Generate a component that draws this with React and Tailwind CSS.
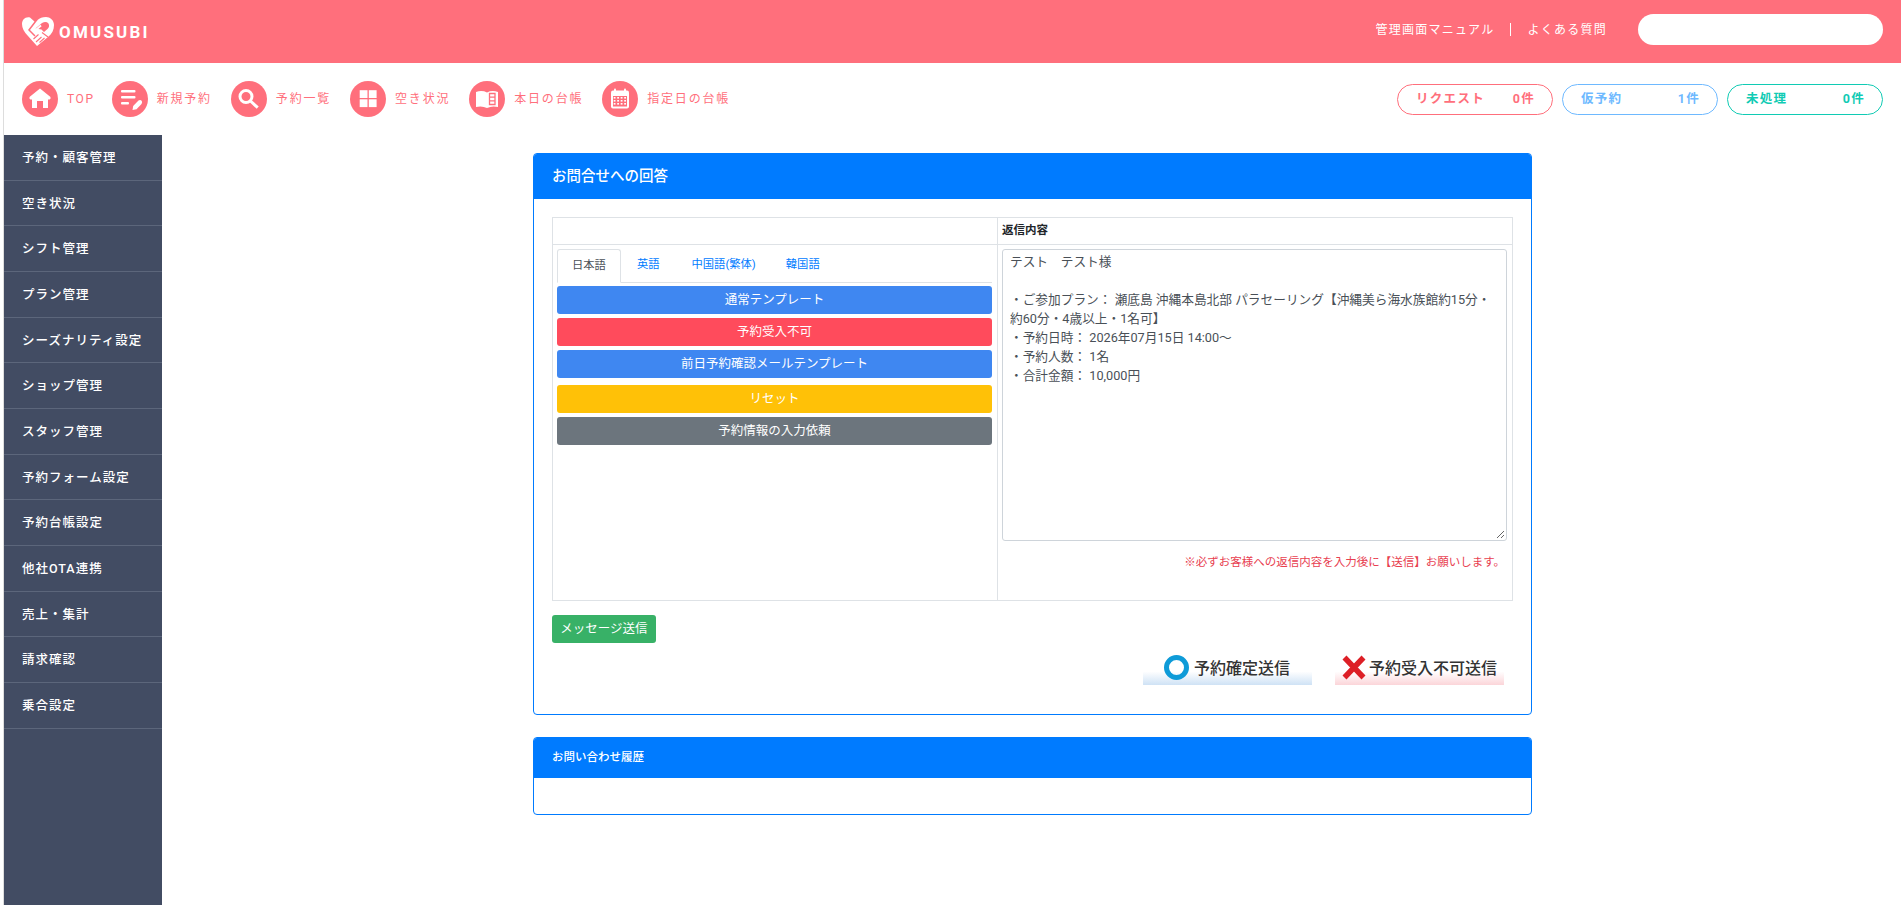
import React from "react";

const FONT = { fontFamily: '"Roboto", "Noto Sans CJK JP", sans-serif' };
const navs = [
  ["TOP", "home"],
  ["新規予約", "form"],
  ["予約一覧", "search"],
  ["空き状況", "grid"],
  ["本日の台帳", "book"],
  ["指定日の台帳", "cal"],
];
const side = ["予約・顧客管理","空き状況","シフト管理","プラン管理","シーズナリティ設定","ショップ管理","スタッフ管理","予約フォーム設定","予約台帳設定","他社OTA連携","売上・集計","請求確認","乗合設定"];

function Icon({ k }) {
  const inner = {
    home: <path d="M18 7.500 L7.500 16 Q7 18 8.500 18.500 H10 V27 H15 V20 H21 V27 H26 V18.500 H27.500 Q29 18 28.500 16 Z" fill="#fff" />,
    form: <g fill="#fff"><rect x="9" y="9" width="14.500" height="2.400" rx="1" /><rect x="9" y="15" width="14.500" height="2.400" rx="1" /><rect x="9" y="21" width="8" height="2.400" rx="1" /><path d="M20.500 29 L21.200 25 L26.500 19.500 Q28.500 18.500 29.800 20 Q30.500 21.500 29.500 23 L24.500 28.200 Z" /></g>,
    search: <g fill="none" stroke="#fff"><circle cx="15" cy="15.500" r="6" strokeWidth="3" /><path d="M19.500 20 L26.700 26.700" strokeWidth="3" /></g>,
    grid: <g fill="#fff"><rect x="9.700" y="9.200" width="7.800" height="7.800" /><rect x="18.800" y="9.200" width="7.800" height="7.800" /><rect x="9.700" y="18.300" width="7.800" height="7.800" /><rect x="18.800" y="18.300" width="7.800" height="7.800" /></g>,
    book: <g><path d="M7 11 Q13 9 18 11.500 V27 Q13 24.500 7 26 Z" fill="#fff" /><path d="M29 11 Q23 9 18 11.500 V27 Q23 24.500 29 26 Z" fill="#fff" /><path d="M20.500 12.500 H26 V23.500 H20.500 Z M20.500 16.200 H26 M20.500 19.800 H26" stroke="#FF6F7C" strokeWidth="1.300" fill="none" /></g>,
    cal: <g><rect x="9" y="9.500" width="18" height="18" rx="2" fill="#fff" /><rect x="12" y="7.500" width="2" height="4" rx="1" fill="#fff" /><rect x="22" y="7.500" width="2" height="4" rx="1" fill="#fff" /><rect x="11" y="15" width="14" height="10.500" fill="#FF6F7C" />{[12.500,16,19.500,23].flatMap((x) => [16.500,19.500,22.500].map((y) => <rect key={x + "-" + y} x={x - 0.8} y={y - 0.5} width="1.800" height="1.600" fill="#fff" />))}</g>,
  }[k];
  return (
    <svg width="36" height="36" viewBox="0 0 36 36" className="shrink-0">
      <circle cx="18" cy="18" r="18" fill="#FF6F7C" />
      {inner}
    </svg>
  );
}

function Logo() {
  return (
    <svg width="32" height="29" viewBox="0 0 32 29" className="shrink-0">
      <path d="M8 0.500 C3 -0.500 0 3 0 7 C0 11 2 15 6 19 L15 29 L26 20 C30 17 32 13 32 8 C32 3 28 0 24 0 C20 0 18 1 15.500 3 L13 5 Z" fill="#fff" />
      <path d="M15 2.500 L7 13 L13 19" stroke="#FF6F7C" strokeWidth="1.500" fill="none" />
      <path d="M13.500 11.500 L20 6 Q24 3.800 26.500 6.500 Q28 9.500 25.500 12 L22 15 L19.500 12.500 Z" fill="#FF6F7C" />
      <path d="M19 8.500 L12 14.500" stroke="#fff" strokeWidth="2" />
      <path d="M11.500 22 L16.500 17.500 M14 25 L19.500 20 M17.500 25.500 L22.500 21 M20 15.500 L26 20" stroke="#FF6F7C" strokeWidth="1.100" fill="none" />
    </svg>
  );
}

function Pill({ label, count, cls }) {
  return (
    <div className={"flex h-[31px] w-[156px] items-center justify-between rounded-full border bg-white pl-[18px] pr-[17px] text-[12.500px] font-bold tracking-[1.300px] " + cls}>
      <span>{label}</span>
      <span>{count}</span>
    </div>
  );
}

function TplBtn({ children, cls }) {
  return <div className={"flex h-7 items-center justify-center rounded-[3px] text-[12.500px] text-white " + cls}>{children}</div>;
}

export default function App() {
  return (
    <div style={FONT} className="flex h-[905px] w-[1901px] flex-col overflow-hidden bg-white pl-[3px]">
      <div className="flex min-h-0 flex-1 flex-col border-l border-[#DDDDDD]">
        <header className="flex h-[63px] shrink-0 items-center justify-between bg-[#FF6F7C] pl-[18px] pr-[18px]">
          <div className="flex items-center">
            <Logo />
            <span className="ml-[5px] mt-[1px] text-[17px] font-bold leading-none tracking-[2.200px] text-white">OMUSUBI</span>
          </div>
          <div className="mb-[4px] flex items-center text-[12px] tracking-[1.250px] text-white">
            <span>管理画面マニュアル</span>
            <span className="mx-[16px] h-[13px] w-px bg-white" />
            <span>よくある質問</span>
            <div className="ml-[31px] h-[31px] w-[245px] rounded-full bg-white" />
          </div>
        </header>
        <div className="flex h-[72px] shrink-0 items-center justify-between pl-[18px] pr-[18px]">
          <div className="flex items-center">
            {navs.map(([t, k]) => (
              <div key={k} className={k === "home" ? "mr-[17px] flex items-center" : "mr-[19px] flex items-center"}>
                <Icon k={k} />
                <span className={k === "home" ? "ml-[9px] text-[12px] tracking-[1.600px] text-[#FF6F7C]" : "ml-[9px] text-[12px] tracking-[1.800px] text-[#FF6F7C]"}>{t}</span>
              </div>
            ))}
          </div>
          <div className="flex items-center gap-[9px]">
            <Pill label="リクエスト" count="0件" cls="border-[#FF6F7C] text-[#FF6F7C]" />
            <Pill label="仮予約" count="1件" cls="border-[#6EB9FF] text-[#6EB9FF]" />
            <Pill label="未処理" count="0件" cls="border-[#10CBB4] text-[#10CBB4]" />
          </div>
        </div>
        <div className="flex min-h-0 flex-1">
          <aside className="w-[158px] shrink-0 bg-[#424C63]">
            {side.map((s) => (
              <div key={s} className="flex h-[45.670px] items-center border-b border-[#5C667B] pl-[18px] pt-[2px] text-[12.500px] font-medium tracking-[1px] text-white">{s}</div>
            ))}
          </aside>
          <main className="flex-1 pl-[371px] pt-[18px]">
            <section className="w-[999px] overflow-hidden rounded-[4px] border border-[#007BFF]">
              <div className="flex h-[45px] items-center bg-[#007BFF] pl-[18px] text-[14.500px] font-medium text-white">お問合せへの回答</div>
              <div className="h-[515px] px-[18px] pt-[18px]">
                <div className="grid h-[384px] grid-cols-[445px_1fr] grid-rows-[27px_1fr] border border-[#DEE2E6] text-[#212529]">
                  <div className="border-b border-r border-[#DEE2E6]" />
                  <div className="flex items-center border-b border-[#DEE2E6] pl-[4px] text-[11.500px] font-bold">返信内容</div>
                  <div className="border-r border-[#DEE2E6] pl-[4px] pr-[5px] pt-[4px]">
                    <div className="flex h-[34px] border-b border-[#DEE2E6] text-[11.300px]">
                      <div className="flex h-[34px] items-center rounded-t-[3px] border border-[#DEE2E6] border-b-white bg-white px-[14px] text-[#495057]">日本語</div>
                      <div className="flex items-center px-[16px] text-[#007BFF]">英語</div>
                      <div className="flex items-center px-[16px] text-[#007BFF]">中国語(繁体)</div>
                      <div className="flex items-center pl-[14px] pr-[16px] text-[#007BFF]">韓国語</div>
                    </div>
                    <div className="mt-[3px] flex flex-col">
                      <TplBtn cls="bg-[#3F87F1]">通常テンプレート</TplBtn>
                      <TplBtn cls="mt-[4px] bg-[#FF4B5C]">予約受入不可</TplBtn>
                      <TplBtn cls="mt-[4px] bg-[#3F87F1]">前日予約確認メールテンプレート</TplBtn>
                      <TplBtn cls="mt-[7px] bg-[#FFC107]">リセット</TplBtn>
                      <TplBtn cls="mt-[4px] bg-[#6C757D]">予約情報の入力依頼</TplBtn>
                    </div>
                  </div>
                  <div className="pl-[4px] pr-[5px] pt-[4px]">
                    <div className="relative h-[292px] rounded-[3px] border border-[#CED4DA] pl-[7px] pr-[12px] pt-[2px] text-[12.700px] leading-[19px] text-[#495057]">
                      <p>テスト　テスト様</p>
                      <p>&nbsp;</p>
                      <p>・ご参加プラン： 瀬底島 沖縄本島北部 パラセーリング【沖縄美ら海水族館約15分・約60分・4歳以上・1名可】</p>
                      <p>・予約日時： 2026年07月15日 14:00～</p>
                      <p>・予約人数： 1名</p>
                      <p>・合計金額： 10,000円</p>
                      <svg width="9" height="9" viewBox="0 0 9 9" className="absolute bottom-[1px] right-[1px]">
                        <path d="M1 8 L8 1 M5 8 L8 5" stroke="#666" strokeWidth="1" />
                      </svg>
                    </div>
                    <div className="mt-[13px] pr-[2px] text-right text-[11.500px] leading-[16px] text-[#E8404F]">※必ずお客様への返信内容を入力後に【送信】お願いします。</div>
                  </div>
                </div>
                <div className="mt-[14px] flex h-[28px] w-[104px] items-center justify-center rounded-[3px] bg-[#38B167] text-[12.500px] text-white">メッセージ送信</div>
                <div className="mt-[8px] flex justify-end gap-[23px] pr-[9px]">
                  <div className="flex h-[34px] w-[169px] items-start justify-start bg-gradient-to-b from-white from-60% to-[#CFE2F5] pl-[21px] pt-[4px] text-[#333]">
                    <svg width="25" height="25" viewBox="0 0 25 25" className="shrink-0"><circle cx="12.500" cy="12.500" r="10" fill="none" stroke="#0E9BD8" strokeWidth="5" /></svg>
                    <span className="ml-[5px] mt-[6px] text-[16px] leading-none font-medium">予約確定送信</span>
                  </div>
                  <div className="flex h-[34px] w-[169px] items-start justify-start bg-gradient-to-b from-white from-60% to-[#FBD5D9] pl-[7px] pt-[4px] text-[#333]">
                    <svg width="24" height="25" viewBox="0 0 24 25" className="shrink-0"><path d="M2.500 2.500 L21.500 22.500 M21.500 2.500 L2.500 22.500" stroke="#DD1F26" strokeWidth="5.500" /></svg>
                    <span className="ml-[3px] mt-[6px] text-[16px] leading-none font-medium">予約受入不可送信</span>
                  </div>
                </div>
              </div>
            </section>
            <section className="mt-[22px] w-[999px] overflow-hidden rounded-[4px] border border-[#007BFF]">
              <div className="flex h-[40px] items-center bg-[#007BFF] pl-[18px] text-[11.500px] font-medium text-white">お問い合わせ履歴</div>
              <div className="h-[36px]" />
            </section>
          </main>
        </div>
      </div>
    </div>
  );
}
